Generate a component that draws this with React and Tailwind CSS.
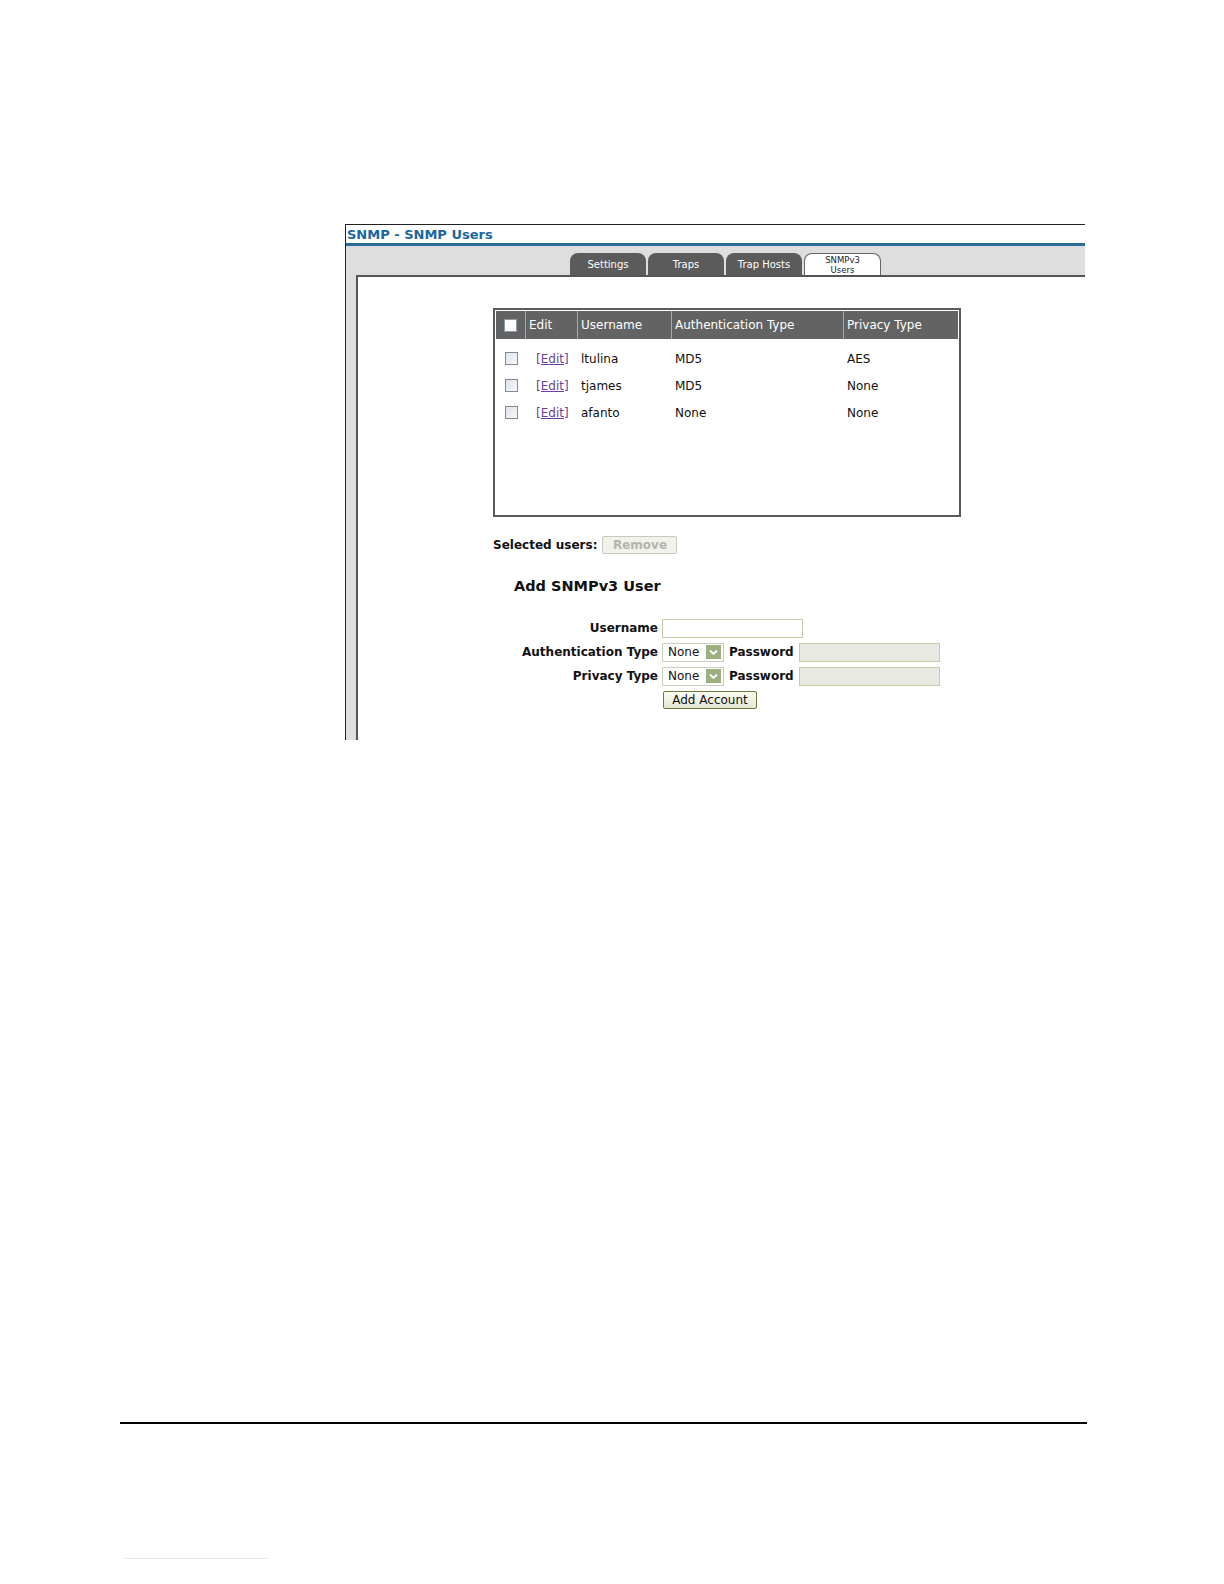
import React from 'react';

const USERS = [
  { name: 'ltulina', auth: 'MD5', priv: 'AES' },
  { name: 'tjames', auth: 'MD5', priv: 'None' },
  { name: 'afanto', auth: 'None', priv: 'None' },
];

const TABS = ['Settings', 'Traps', 'Trap Hosts'];

const Check = ({ header = false }) => (
  <span
    className={`inline-block h-[13px] w-[13px] border ${
      header ? 'border-[#8a9aa8] bg-white' : 'border-[#7d8c99] bg-gradient-to-br from-[#dfe3e8] to-[#f7f8fa]'
    }`}
  />
);

const Select = () => (
  <div className="flex h-[19px] w-[62px] items-center justify-between border border-[#c9ccb8] bg-white pl-[5px] pr-[2px]">
    <span>None</span>
    <span className="flex h-[14px] w-[15px] items-center justify-center bg-[#9caf7c]">
      <svg width="9" height="7" viewBox="0 0 9 7">
        <path d="M1 1.5 L4.5 5 L8 1.5" fill="none" stroke="#ffffff" strokeWidth="1.8" />
      </svg>
    </span>
  </div>
);

export default function App() {
  return (
    <div className="relative h-[1584px] w-[1224px] bg-white font-['DejaVu_Sans',Verdana,sans-serif] text-[12px] text-[#111]">
      <div className="ml-[345px] w-[740px] pt-[224px]">
        <div className="flex h-[516px] flex-col border-l border-t border-[#222]">
          <div className="h-[18px] pl-px text-[13px] font-bold leading-[19px] text-[#1a66a0]">SNMP - SNMP Users</div>
          <div className="h-[3px] bg-[#2a6d9a]" />
          <div className="flex flex-1 flex-col bg-[#dedede] pl-[10px]">
            <div className="flex h-[29px] items-end gap-[2px] pl-[214px]">
              {TABS.map((t) => (
                <div
                  key={t}
                  className="flex h-[22px] w-[76px] items-center justify-center rounded-t-[8px] bg-[#5b5b5b] text-[10px] text-white"
                >
                  {t}
                </div>
              ))}
              <div className="-mb-px flex h-[23px] w-[77px] flex-col items-center justify-center rounded-t-[8px] border border-b-0 border-[#666] bg-white text-[8.5px] leading-[10px] text-[#222]">
                <span>SNMPv3</span>
                <span>Users</span>
              </div>
            </div>
            <div className="flex-1 border-l-2 border-t-2 border-[#555] bg-white pl-[135px] pt-[31px]">
              <div className="h-[209px] w-[468px] border-2 border-[#5a5a5a] p-px">
                <div className="flex h-[28px] bg-[#636363] text-[12px] text-white">
                  <div className="flex w-[30px] items-center justify-center border-r border-[#a9a9a9]">
                    <Check header />
                  </div>
                  <div className="flex w-[52px] items-center border-r border-[#a9a9a9] pl-[3px]">Edit</div>
                  <div className="flex w-[94px] items-center border-r border-[#a9a9a9] pl-[3px]">Username</div>
                  <div className="flex w-[172px] items-center border-r border-[#a9a9a9] pl-[3px]">Authentication Type</div>
                  <div className="flex flex-1 items-center pl-[3px]">Privacy Type</div>
                </div>
                <div className="pt-[6px]">
                  {USERS.map((u) => (
                    <div key={u.name} className="flex h-[27px] items-center">
                      <div className="flex w-[30px] justify-center">
                        <Check />
                      </div>
                      <div className="w-[52px] pl-[10px]">
                        <span className="text-[#6b3fa0] underline">[Edit]</span>
                      </div>
                      <div className="w-[94px] pl-[3px]">{u.name}</div>
                      <div className="w-[172px] pl-[3px]">{u.auth}</div>
                      <div className="flex-1 pl-[3px]">{u.priv}</div>
                    </div>
                  ))}
                </div>
              </div>

              <div className="mt-[19px] flex items-center gap-[5px]">
                <span className="font-bold">Selected users:</span>
                <span className="flex h-[18px] w-[75px] items-center justify-center rounded-[2px] border border-[#c9c9c0] bg-[#f2f2ec] font-bold text-[#b4b4ac]">
                  Remove
                </span>
              </div>

              <div className="mt-[22px] pl-[21px] text-[14.5px] font-bold">Add SNMPv3 User</div>

              <div className="mt-[21px] grid grid-cols-[165px_auto] items-center gap-x-[4px] gap-y-[5px]">
                <div className="text-right font-bold">Username</div>
                <div className="h-[19px] w-[141px] border border-[#c6ccaa] bg-white" />

                <div className="text-right font-bold">Authentication Type</div>
                <div className="flex items-center gap-[5px]">
                  <Select />
                  <span className="font-bold">Password</span>
                  <div className="h-[19px] w-[141px] border border-[#c6ccaa] bg-[#e8e9e2]" />
                </div>

                <div className="text-right font-bold">Privacy Type</div>
                <div className="flex items-center gap-[5px]">
                  <Select />
                  <span className="font-bold">Password</span>
                  <div className="h-[19px] w-[141px] border border-[#c6ccaa] bg-[#e8e9e2]" />
                </div>

                <div />
                <div className="pl-px">
                  <span className="flex h-[18px] w-[94px] items-center justify-center rounded-[2px] border border-[#6d7a3c] bg-gradient-to-b from-[#fbfbf2] to-[#e6e6d4]">
                    Add Account
                  </span>
                </div>
              </div>
            </div>
          </div>
        </div>
      </div>

      <div className="ml-[120px] mt-[682px] h-[2px] w-[967px] bg-black" />
      <div className="ml-[125px] mt-[134px] h-px w-[142px] bg-[#e4e8f0]" />
    </div>
  );
}
